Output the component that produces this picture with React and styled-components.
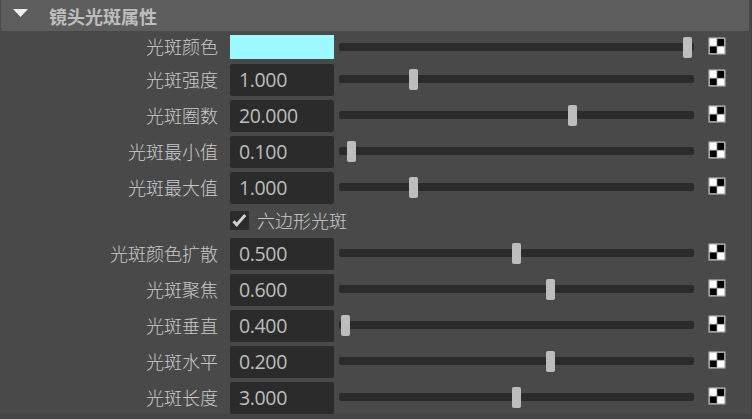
import React from 'react';
import styled, { createGlobalStyle } from 'styled-components';

const GlobalStyle = createGlobalStyle`
  * { box-sizing: border-box; }
  body { margin: 0; background: #494949; overflow: hidden; }
`;

const Panel = styled.main`
  width: 752px;
  height: 419px;
  display: flex;
  flex-direction: column;
  background: #494949;
  border-right: 1px solid #414141;
  border-bottom: 5px solid #444444;
  color: #c9c9c9;
  font-family: "Noto Sans CJK SC", sans-serif;
  font-size: 18px;
  font-weight: 300;
`;

const Header = styled.header`
  height: 31px;
  margin: 0 2px 4px 1px;
  padding-left: 12px;
  flex: none;
  display: flex;
  align-items: center;
  gap: 21px;
  background: #5d5d5d;
  border-radius: 0 0 2px 2px;
`;

const Title = styled.h1`
  margin: 0;
  color: #bdbdbd;
  font-size: 18px;
  line-height: 30px;
  font-weight: 700;
`;

const Arrow = styled.svg`
  width: 15px;
  height: 8px;
  margin-bottom: 5px;
  display: block;
`;

const Rows = styled.div`
  display: flex;
  flex-direction: column;
  gap: 4px;
`;

const Row = styled.div`
  height: ${(p) => p.$height}px;
  display: grid;
  grid-template-columns: 230px 109px 369px 18px;
  align-items: start;
`;

const Label = styled.label`
  padding-right: 12px;
  text-align: right;
  line-height: ${(p) => (p.$short ? 23 : 31)}px;
  white-space: nowrap;
`;

const Swatch = styled.div`
  width: 104px;
  height: 24px;
  background: #9bf9ff;
`;

const Field = styled.div`
  width: 104px;
  height: 32px;
  padding-left: 9px;
  background: #2b2b2b;
  border-radius: 2px;
  color: #bdbdbd;
  font-family: "Open Sans", "Noto Sans", sans-serif;
  font-size: 19.5px;
  font-weight: 400;
  line-height: 31px;
  letter-spacing: -0.35px;
`;

const Slider = styled.div`
  width: 355px;
  height: 21px;
  margin-top: ${(p) => (p.$short ? 2 : 5)}px;
  display: grid;
  grid-template-columns: ${(p) => p.$offset}px 9px 1fr;
  align-items: center;
`;

const Track = styled.div`
  grid-area: 1 / 1 / 2 / 4;
  height: 8px;
  margin-bottom: 1px;
  background: #2b2b2b;
  border-radius: 2px;
`;

const Thumb = styled.div`
  grid-area: 1 / 2 / 2 / 3;
  height: 21px;
  background: #bdbdbd;
  border-radius: 2px;
`;

const MapIcon = styled.svg`
  display: block;
  width: 18px;
  height: 18px;
  margin-top: ${(p) => (p.$short ? 2 : 5)}px;
`;

const CheckRow = styled.label`
  height: 26px;
  padding: 3px 0 0 230px;
  display: flex;
  align-items: flex-start;
  gap: 8px;
  line-height: 19px;
`;

const CheckBox = styled.svg`
  width: 19px;
  height: 19px;
  display: block;
  background: #2b2b2b;
  border-radius: 1px;
`;

function Checker({ short }) {
  return (
    <MapIcon $short={short} viewBox="0 0 18 18">
      <rect width="18" height="18" rx="1.5" fill="#858585" />
      <rect x="1" y="1" width="16" height="16" fill="#a2a2a2" />
      <path fill="#fff" d="M1.5 1.5H9V9.3H1.5zM9 9.3h7.4v7.2H9z" />
      <path fill="#000" d="M9.2 2H16v7H9.2zM2 9.5h6.8V16H2z" />
      <path stroke="#777" strokeWidth=".6" d="M8.9 1.5v15M1.5 9.2h15" />
    </MapIcon>
  );
}

function Attribute({ name, value, offset, swatch }) {
  return (
    <Row $height={swatch ? 25 : 32}>
      <Label $short={swatch}>{name}</Label>
      {swatch ? <Swatch /> : <Field>{value}</Field>}
      <Slider $offset={offset} $short={swatch}>
        <Track />
        <Thumb />
      </Slider>
      <Checker short={swatch} />
    </Row>
  );
}

const before = [
  ['光斑强度', '1.000', 70],
  ['光斑圈数', '20.000', 229],
  ['光斑最小值', '0.100', 8],
  ['光斑最大值', '1.000', 70],
];

const after = [
  ['光斑颜色扩散', '0.500', 173],
  ['光斑聚焦', '0.600', 207],
  ['光斑垂直', '0.400', 2],
  ['光斑水平', '0.200', 207],
  ['光斑长度', '3.000', 173],
];

const renderAttribute = ([name, value, offset]) => (
  <Attribute key={name} name={name} value={value} offset={offset} />
);

export default function App() {
  return (
    <>
      <GlobalStyle />
      <Panel>
        <Header>
          <Arrow viewBox="0 0 15 8"><path d="M0 0H15L7.5 8z" fill="#eee" /></Arrow>
          <Title>镜头光斑属性</Title>
        </Header>
        <Rows>
          <Attribute name="光斑颜色" offset={344} swatch />
          {before.map(renderAttribute)}
          <CheckRow>
            <CheckBox viewBox="0 0 19 19">
              <path d="M3.5 10.2 6.7 13.8 15.2 4" fill="none" stroke="#d2d2d2" strokeWidth="2.9" />
            </CheckBox>
            六边形光斑
          </CheckRow>
          {after.map(renderAttribute)}
        </Rows>
      </Panel>
    </>
  );
}
